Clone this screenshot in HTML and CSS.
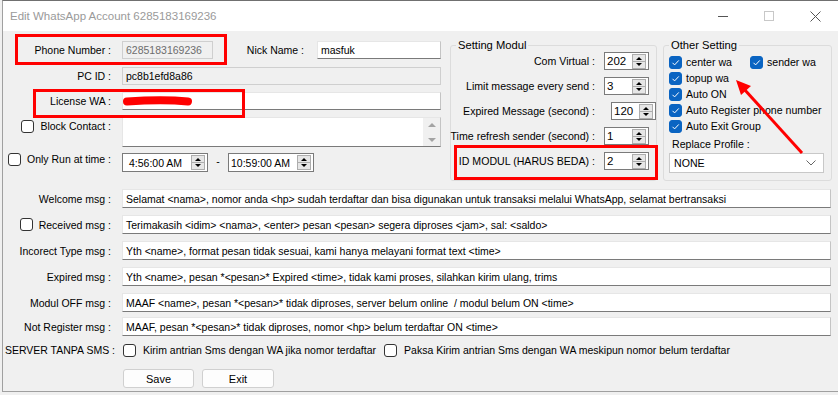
FILE: index.html
```html
<!DOCTYPE html>
<html lang="id">
<head>
    <meta charset="UTF-8">
    <title>Edit WhatsApp Account 6285183169236</title>
    <link rel="stylesheet" href="styles.css">
</head>
<body>
    <div class="window">
        <div class="titlebar">
            <span class="title">Edit WhatsApp Account 6285183169236</span>
            <div class="controls">
                <span class="ctl"><svg width="10" height="10"><line x1="0" y1="5.5" x2="10" y2="5.5" stroke="#555" stroke-width="1"/></svg></span>
                <span class="ctl"><svg width="10" height="10"><rect x="0.5" y="0.5" width="9" height="9" fill="none" stroke="#c8c8c8" stroke-width="1"/></svg></span>
                <span class="ctl"><svg width="11" height="11"><path d="M0.5 0.5L10.5 10.5M10.5 0.5L0.5 10.5" stroke="#555" stroke-width="1"/></svg></span>
            </div>
        </div>

        <div class="client">
            <div class="top">
                <div class="left-col">
                    <div class="frow">
                        <div class="lbl">Phone Number :</div>
                        <div class="tb ro grey-text phone">6285183169236</div>
                        <div class="lbl nick-lbl">Nick Name :</div>
                        <div class="tb grow">masfuk</div>
                    </div>
                    <div class="frow r2">
                        <div class="lbl">PC ID :</div>
                        <div class="tb ro grow">pc8b1efd8a86</div>
                    </div>
                    <div class="frow r3">
                        <div class="lbl">License WA :</div>
                        <div class="tb grow"></div>
                    </div>
                    <div class="frow r4">
                        <div class="lbl top-lbl"><span class="cb"></span>Block Contact :</div>
                        <div class="tb area grow">
                            <div class="vscroll">
                                <i class="tri-up"></i>
                                <i class="tri-down"></i>
                            </div>
                        </div>
                    </div>
                    <div class="frow r5">
                        <div class="lbl top-lbl short"><span class="cb"></span>Only Run at time :</div>
                        <div class="picker">
                            <span class="val">4:56:00 AM</span>
                            <span class="spin-btns"><i class="up"></i><i class="down"></i></span>
                        </div>
                        <span class="dash">-</span>
                        <div class="picker pick2">
                            <span class="val">10:59:00 AM</span>
                            <span class="spin-btns"><i class="up"></i><i class="down"></i></span>
                        </div>
                    </div>
                </div>

                <div class="group modul">
                    <span class="group-title">Setting Modul</span>
                    <div class="srow-m">
                        <div class="mlbl">Com Virtual :</div>
                        <div class="spin"><span class="val">202</span><span class="spin-btns"><i class="up"></i><i class="down"></i></span></div>
                    </div>
                    <div class="srow-m">
                        <div class="mlbl">Limit message every send :</div>
                        <div class="spin"><span class="val">3</span><span class="spin-btns"><i class="up"></i><i class="down"></i></span></div>
                    </div>
                    <div class="srow-m">
                        <div class="mlbl exp">Expired Message (second) :</div>
                        <div class="spin"><span class="val">120</span><span class="spin-btns"><i class="up"></i><i class="down"></i></span></div>
                    </div>
                    <div class="srow-m">
                        <div class="mlbl">Time refresh sender (second) :</div>
                        <div class="spin"><span class="val">1</span><span class="spin-btns"><i class="up"></i><i class="down"></i></span></div>
                    </div>
                    <div class="srow-m">
                        <div class="mlbl">ID MODUL (HARUS BEDA) :</div>
                        <div class="spin"><span class="val">2</span><span class="spin-btns"><i class="up"></i><i class="down"></i></span></div>
                    </div>
                </div>

                <div class="group other">
                    <span class="group-title">Other Setting</span>
                    <div class="orow first">
                        <label class="opt"><span class="cb on"><svg width="11" height="11"><path d="M2.5 5.8L4.6 7.9L8.8 3.4" fill="none" stroke="#fff" stroke-width="1"/></svg></span>center wa</label>
                        <label class="opt sender"><span class="cb on"><svg width="11" height="11"><path d="M2.5 5.8L4.6 7.9L8.8 3.4" fill="none" stroke="#fff" stroke-width="1"/></svg></span>sender wa</label>
                    </div>
                    <div class="orow">
                        <label class="opt"><span class="cb on"><svg width="11" height="11"><path d="M2.5 5.8L4.6 7.9L8.8 3.4" fill="none" stroke="#fff" stroke-width="1"/></svg></span>topup wa</label>
                    </div>
                    <div class="orow">
                        <label class="opt"><span class="cb on"><svg width="11" height="11"><path d="M2.5 5.8L4.6 7.9L8.8 3.4" fill="none" stroke="#fff" stroke-width="1"/></svg></span>Auto ON</label>
                    </div>
                    <div class="orow">
                        <label class="opt"><span class="cb on"><svg width="11" height="11"><path d="M2.5 5.8L4.6 7.9L8.8 3.4" fill="none" stroke="#fff" stroke-width="1"/></svg></span>Auto Register phone number</label>
                    </div>
                    <div class="orow">
                        <label class="opt"><span class="cb on"><svg width="11" height="11"><path d="M2.5 5.8L4.6 7.9L8.8 3.4" fill="none" stroke="#fff" stroke-width="1"/></svg></span>Auto Exit Group</label>
                    </div>
                    <div class="replace-lbl">Replace Profile :</div>
                    <div class="combo">
                        <span>NONE</span>
                        <svg width="10" height="6"><polyline points="0.5,0.5 5,5 9.5,0.5" fill="none" stroke="#666" stroke-width="1"/></svg>
                    </div>
                </div>
            </div>

            <div class="msgs">
                <div class="mrow">
                    <div class="lbl">Welcome msg :</div>
                    <div class="tb msg">Selamat &lt;nama&gt;, nomor anda &lt;hp&gt; sudah terdaftar dan bisa digunakan untuk transaksi melalui WhatsApp, selamat bertransaksi</div>
                </div>
                <div class="mrow">
                    <div class="lbl"><span class="cb"></span>Received msg :</div>
                    <div class="tb msg">Terimakasih &lt;idim&gt; &lt;nama&gt;, &lt;enter&gt; pesan &lt;pesan&gt; segera diproses &lt;jam&gt;, sal: &lt;saldo&gt;</div>
                </div>
                <div class="mrow">
                    <div class="lbl">Incorect Type msg :</div>
                    <div class="tb msg">Yth &lt;name&gt;, format pesan tidak sesuai, kami hanya melayani format text &lt;time&gt;</div>
                </div>
                <div class="mrow">
                    <div class="lbl">Expired msg :</div>
                    <div class="tb msg">Yth &lt;name&gt;, pesan *&lt;pesan&gt;* Expired &lt;time&gt;, tidak kami proses, silahkan kirim ulang, trims</div>
                </div>
                <div class="mrow">
                    <div class="lbl">Modul OFF msg :</div>
                    <div class="tb msg">MAAF &lt;name&gt;, pesan *&lt;pesan&gt;* tidak diproses, server belum online&nbsp; / modul belum ON &lt;time&gt;</div>
                </div>
                <div class="mrow last">
                    <div class="lbl">Not Register msg :</div>
                    <div class="tb msg">MAAF, pesan *&lt;pesan&gt;* tidak diproses, nomor &lt;hp&gt; belum terdaftar ON &lt;time&gt;</div>
                </div>
            </div>

            <div class="server-row">
                <div class="lbl server-lbl">SERVER TANPA SMS :</div>
                <label class="opt wide"><span class="cb"></span>Kirim antrian Sms dengan WA jika nomor terdaftar</label>
                <label class="opt wide"><span class="cb"></span>Paksa Kirim antrian Sms dengan WA meskipun nomor belum terdaftar</label>
            </div>

            <div class="btn-row">
                <button class="btn save">Save</button>
                <button class="btn exit">Exit</button>
            </div>
        </div>
    </div>

    <!-- coretan merah di atas screenshot -->
    <svg class="marks" width="838" height="395">
        <rect x="16.5" y="35.5" width="209" height="28" fill="none" stroke="#f00" stroke-width="3"/>
        <rect x="34.5" y="90.5" width="209" height="26" fill="none" stroke="#f00" stroke-width="3"/>
        <rect x="455.5" y="146.5" width="201" height="32" fill="none" stroke="#f00" stroke-width="3"/>
        <path d="M127 101.5 C 150 100, 172 100, 188 101.5" fill="none" stroke="#f00" stroke-width="8" stroke-linecap="round"/>
        <line x1="802" y1="153" x2="744" y2="89" stroke="#f00" stroke-width="3"/>
        <polygon points="736,80 751,86 741,95" fill="#f00"/>
    </svg>
</body>
</html>
```

FILE: styles.css
```css
body {
    margin: 0;
    background: #f0f0f0;
    font-family: "Liberation Sans", Arial, sans-serif;
    font-size: 10.5px;
    color: #000;
    position: relative;
    width: 838px;
    height: 395px;
    overflow: hidden;
}
.window {
    margin-left: 2px;
    width: 836px;
    height: 392px;
    box-sizing: border-box;
    border-top: 1px solid #707070;
    border-left: 1px solid #a0a0a0;
    border-bottom: 1px solid #a0a0a0;
    background: #f0f0f0;
}
.titlebar {
    height: 30px;
    background: #fff;
    display: flex;
    align-items: center;
    padding-left: 7px;
}
.title {
    font-size: 11.5px;
    color: #9a9a9a;
}
.controls {
    margin-left: auto;
    display: flex;
}
.ctl {
    width: 46px;
    height: 30px;
    display: flex;
    align-items: center;
    justify-content: center;
}

/* ---- bagian atas ---- */
.top {
    display: flex;
    align-items: flex-start;
    height: 150px;
}
.left-col {
    width: 438px;
    margin-top: 10px;
    display: flex;
    flex-direction: column;
}
.frow {
    display: flex;
    align-items: center;
    height: 18px;
}
.r2 { margin-top: 8px; }
.r3 { margin-top: 7px; }
.r4 { margin-top: 7px; height: 30px; align-items: stretch; }
.r5 { margin-top: 6px; height: 19px; align-items: stretch; }
.lbl {
    width: 108px;
    margin-right: 11px;
    flex-shrink: 0;
    display: flex;
    justify-content: flex-end;
    align-items: center;
    gap: 6px;
    white-space: nowrap;
}
.top-lbl { align-self: flex-start; height: 18px; }
.top-lbl.short { height: 12px; }
.nick-lbl {
    width: 91px;
    margin-right: 13px;
}
.tb {
    height: 18px;
    box-sizing: border-box;
    background: #fff;
    border: 1px solid #e6e6e6;
    border-bottom-color: #7a7a7a;
    border-right-color: #c4c4c4;
    padding: 0 3px;
    display: flex;
    align-items: center;
    white-space: nowrap;
    overflow: hidden;
}
.tb.ro {
    background: #f0f0f0;
    border-color: #cfcfcf;
}
.grey-text { color: #6d6d6d; }
.phone { width: 91px; }
.grow { flex: 1; }
.area {
    height: 30px;
    position: relative;
    padding: 0;
    justify-content: flex-end;
    align-items: stretch;
}
.vscroll {
    width: 17px;
    background: #f0f0f0;
    display: flex;
    flex-direction: column;
    align-items: center;
    justify-content: space-between;
    padding: 5px 0 4px;
    box-sizing: border-box;
}
.tri-up, .tri-down {
    width: 0;
    height: 0;
    border-left: 4px solid transparent;
    border-right: 4px solid transparent;
}
.tri-up { border-bottom: 4px solid #a3a3a3; }
.tri-down { border-top: 4px solid #a3a3a3; }

/* time picker + numeric */
.picker, .spin {
    height: 19px;
    box-sizing: border-box;
    background: #fff;
    border: 1px solid #7a7a7a;
    display: flex;
    align-items: center;
    justify-content: space-between;
    padding-left: 6px;
}
.picker { width: 86px; }
.pick2 { padding-left: 2px; }
.dash {
    width: 20px;
    text-align: center;
    align-self: center;
    margin-top: -4px;
}
.spin-btns {
    width: 14px;
    height: 15px;
    margin-right: 2px;
    display: flex;
    flex-direction: column;
    border: 1px solid #adadad;
    box-sizing: border-box;
    background: #e6e6e6;
}
.spin-btns i {
    flex: 1;
    position: relative;
}
.spin-btns i + i { border-top: 1px solid #adadad; }
.spin-btns i::after {
    content: "";
    position: absolute;
    left: 3px;
    top: 2px;
    border-left: 3px solid transparent;
    border-right: 3px solid transparent;
}
.spin-btns .up::after { border-bottom: 3px solid #000; }
.spin-btns .down::after { border-top: 3px solid #000; top: 1px; }

/* group box */
.group {
    position: relative;
    border: 1px solid #dcdcdc;
    border-radius: 3px;
    box-sizing: border-box;
    height: 136px;
    margin-top: 14px;
}
.group-title {
    position: absolute;
    top: -8px;
    left: 5px;
    padding: 0 2px;
    background: #f0f0f0;
    line-height: 14px;
    font-size: 11.2px;
}
.modul {
    width: 207px;
    margin-left: 9px;
    padding-top: 6px;
    display: flex;
    flex-direction: column;
    gap: 7px;
}
.srow-m {
    display: flex;
    align-items: center;
    height: 18px;
}
.mlbl {
    width: 144px;
    padding-right: 9px;
    flex-shrink: 0;
    display: flex;
    justify-content: flex-end;
    white-space: nowrap;
    font-size: 10.6px;
}
.mlbl.exp { padding-right: 16px; }
.spin {
    width: 45px;
    height: 18px;
    padding-left: 2px;
    font-size: 11.5px;
}
.other {
    width: 169px;
    margin-left: 6px;
    padding: 9px 0 0 5px;
    font-size: 10.6px;
}
.orow {
    display: flex;
    align-items: center;
    height: 16px;
}
.orow.first { height: 14px; margin-bottom: 1px; }
.opt {
    display: flex;
    align-items: center;
    gap: 4px;
    white-space: nowrap;
}
.sender { margin-left: 18px; }
.replace-lbl {
    margin: 3px 0 0 3px;
    height: 14px;
    line-height: 14px;
}
.combo {
    margin-top: 2px;
    width: 155px;
    height: 20px;
    box-sizing: border-box;
    background: #fff;
    border: 1px solid #c8c8c8;
    display: flex;
    align-items: center;
    justify-content: space-between;
    padding: 0 7px 0 4px;
}

/* checkbox */
.cb {
    width: 13px;
    height: 13px;
    box-sizing: border-box;
    border: 1px solid #333;
    border-radius: 3px;
    background: #fff;
    flex-shrink: 0;
    display: flex;
    align-items: center;
    justify-content: center;
}
.cb.on {
    background: #0a64c2;
    border-color: #0a64c2;
}

/* pesan */
.msgs {
    margin-top: 8px;
    display: flex;
    flex-direction: column;
    gap: 7px;
}
.mrow {
    display: flex;
    align-items: center;
    height: 19px;
}
.mrow.last { margin-top: -2px; }
.msg {
    width: 709px;
    height: 19px;
}

.server-row {
    margin-top: 6px;
    height: 16px;
    display: flex;
    align-items: center;
}
.server-lbl {
    width: 112px;
    margin-right: 8px;
}
.opt.wide { gap: 7px; margin-right: 8px; }

.btn-row {
    margin-top: 11px;
    padding-left: 120px;
    display: flex;
    gap: 8px;
}
.btn {
    height: 19px;
    border: 1px solid #d0d0d0;
    border-radius: 3px;
    background: #fdfdfd;
    font-family: inherit;
    font-size: 11px;
    padding: 0;
}
.save { width: 71px; }
.exit { width: 72px; }

.marks {
    position: absolute;
    top: 0;
    left: 0;
    pointer-events: none;
}
```
